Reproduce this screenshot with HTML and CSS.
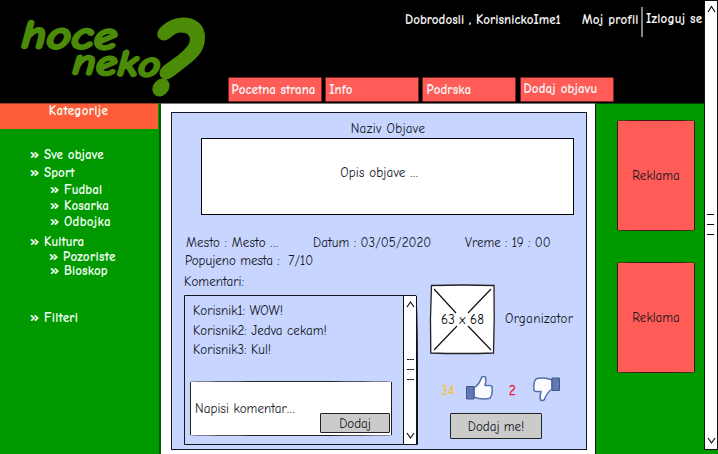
FILE: index.html
```html
<!DOCTYPE html>
<html lang="sr">
<head>
<meta charset="utf-8">
<title>Hoce neko?</title>
<link rel="stylesheet" href="styles.css">
</head>
<body>
<div class="window">
  <div class="page">
    <header class="header">
      <svg class="logo" width="228" height="103" viewBox="0 0 228 103" role="img">
        <g class="logo-text">
          <text class="logo-word" x="21" y="48" textLength="96" lengthAdjust="spacingAndGlyphs" transform="rotate(1 21 48)">hoce</text>
          <text class="logo-word small" x="72" y="74" textLength="88" lengthAdjust="spacingAndGlyphs" transform="rotate(2 72 74)">neko</text>
          <text class="logo-mark" x="150" y="94" textLength="52" lengthAdjust="spacingAndGlyphs">?</text>
        </g>
      </svg>
      <div class="header-main">
        <div class="account">
          <span class="welcome">Dobrodosli , KorisnickoIme1</span>
          <a class="profile">Moj profil</a>
          <span class="divider"></span>
          <a class="logout">Izloguj se</a>
        </div>
        <nav class="nav">
          <a class="nav-item home">Pocetna strana</a>
          <a class="nav-item info">Info</a>
          <a class="nav-item support">Podrska</a>
          <a class="nav-item add">Dodaj objavu</a>
        </nav>
      </div>
    </header>
    <div class="columns">
      <aside class="sidebar">
        <h2 class="sidebar-title">Kategorije</h2>
        <ul class="categories">
          <li class="all"><i>»</i>Sve objave</li>
          <li class="sport"><i>»</i>Sport</li>
          <li class="sub"><i>»</i>Fudbal</li>
          <li class="sub"><i>»</i>Kosarka</li>
          <li class="sub last"><i>»</i>Odbojka</li>
          <li class="culture"><i>»</i>Kultura</li>
          <li class="sub theatre"><i>»</i>Pozoriste</li>
          <li class="sub cinema"><i>»</i>Bioskop</li>
          <li class="filters"><i>»</i>Filteri</li>
        </ul>
      </aside>
      <main class="content">
        <article class="post">
          <h1 class="post-title">Naziv Objave</h1>
          <div class="description"><span>Opis objave <b class="dots">...</b></span></div>
          <div class="facts">
            <span class="place">Mesto : Mesto <b class="dots">...</b></span>
            <span class="date">Datum : 03/05/2020</span>
            <span class="time">Vreme : 19 : 00</span>
          </div>
          <div class="seats">Popujeno mesta :&nbsp; 7/10</div>
          <div class="comments-label">Komentari:</div>
          <div class="lower">
            <section class="comments">
              <div class="comments-body">
                <p class="c1">Korisnik1: WOW!</p>
                <p class="c2">Korisnik2: Jedva cekam!</p>
                <p class="c3">Korisnik3: Kul!</p>
                <div class="composer">
                  <span class="prompt">Napisi komentar<b class="dots">...</b></span>
                  <span class="button send">Dodaj</span>
                </div>
              </div>
              <div class="scroll inner">
                <svg width="9" height="8" viewBox="0 0 9 8"><path d="M1 7 4.500 2 8 7"/></svg>
                <svg class="grip" width="8" height="24" viewBox="0 0 8 24"><path stroke-dasharray="2 .4" d="M1 1.500h7M1 11.500h7M1 21.500h7"/></svg>
                <svg width="9" height="8" viewBox="0 0 9 8"><path d="M1 1 4.500 6 8 1"/></svg>
              </div>
            </section>
            <section class="meta">
              <div class="organizer">
                <svg class="photo" width="65" height="70" viewBox="0 0 65 70">
                  <path class="photo-frame" d="M1.500 1.500Q32 .5 64 1.500L64.200 35 63.500 69Q32 70 .8 69Q-.2 35 1.500 1.500Z"/>
                  <path class="photo-cross" d="M4 5 26 29M61 5 38 29M4 66 27 42M61 66 38 42"/>
                  <text x="11" y="40" textLength="43">63 x 68</text>
                </svg>
                <span class="organizer-name">Organizator</span>
              </div>
              <div class="votes">
                <span class="up-count">34</span>
                <svg class="thumb up" width="29" height="26" viewBox="0 0 29 26">
                  <path class="hand" d="M9 13C13 10 15 8 16.500 2.500Q18 .8 20.500 2Q21.500 5 20 10.500H25Q28 11 27 14Q28 16 26.800 17.500Q27.500 20 25.800 21.500Q25.500 24 22 23.800Q14 24.500 9 22Z"/>
                  <path class="cuff" d="M1.500 11.500H9V24H1.500Z"/>
                </svg>
                <span class="down-count">2</span>
                <svg class="thumb down" width="29" height="26" viewBox="0 0 29 26">
                  <g transform="rotate(180 14.500 13)">
                    <path class="hand" d="M9 13C13 10 15 8 16.500 2.500Q18 .8 20.500 2Q21.500 5 20 10.500H25Q28 11 27 14Q28 16 26.800 17.500Q27.500 20 25.800 21.500Q25.500 24 22 23.800Q14 24.500 9 22Z"/>
                    <path class="cuff" d="M1.500 11.500H9V24H1.500Z"/>
                  </g>
                </svg>
              </div>
              <span class="button join">Dodaj me!</span>
            </section>
          </div>
        </article>
      </main>
      <aside class="ads">
        <div class="ad">Reklama</div>
        <div class="ad">Reklama</div>
      </aside>
    </div>
  </div>
  <div class="scroll outer">
    <svg width="9" height="8" viewBox="0 0 9 8"><path d="M1 7 4.500 1.500 8 7"/></svg>
    <svg class="grip" width="8" height="24" viewBox="0 0 8 24"><path d="M0 1.500h7M0 11.500h7M0 21.500h7"/></svg>
    <svg width="9" height="8" viewBox="0 0 9 8"><path d="M1 1 4.500 6 8 1"/></svg>
  </div>
</div>
</body>
</html>
```
FILE: styles.css
```css
* { box-sizing: border-box; }
body {
  margin: 0;
  background: #009900;
  color: #10131c;
  font: 13px/16px "Comic Neue", "Comic Sans MS", Lato, sans-serif;
  overflow: hidden;
}
h1, h2, p, ul { margin: 0; padding: 0; font-size: inherit; font-weight: inherit; }
svg { display: block; flex: none; overflow: visible; }
span, a, p, li, h1, h2 { white-space: nowrap; }
.dots { font-weight: 400; letter-spacing: .9px; }

.window { display: flex; width: 718px; height: 454px; background: linear-gradient(#000 103px, #009900 103px); }
.page { width: 704px; }
.header { display: flex; height: 103px; background: #000; color: #f4f4f4; font-weight: 700; }
.logo-text { fill: #4b8b08; stroke: #4b8b08; stroke-linejoin: round; font-weight: 700; }
.logo-word { font-size: 41px; font-style: italic; stroke-width: 2px; }
.logo-word.small { font-size: 38px; }
.logo-mark { font-size: 108px; font-style: italic; stroke-width: 5px; }
.header-main { width: 476px; }
.account { display: flex; height: 77px; padding: 7px 0 0 177px; }
.welcome { width: 177px; padding-top: 5px; letter-spacing: .04px; }
.profile { width: 59px; padding-top: 5px; letter-spacing: .25px; }
.divider { width: 2px; height: 30px; background: #858585; }
.logout { padding: 4px 0 0 3px; letter-spacing: .2px; }
.nav { display: grid; grid-template-columns: repeat(4, 94px); column-gap: 3.200px; }
.nav-item { height: 25px; padding: 4px 0 0 3px; background: #ff5c57; border: 1px solid #7c211f; border-radius: 1px; }
.nav-item.home { padding-left: 2.500px; }
.nav-item.info, .nav-item.support { letter-spacing: .1px; }
.nav-item.add { padding-top: 3px; letter-spacing: .15px; }

.columns { display: flex; height: 351px; background: #009900; }
.sidebar { width: 161px; border-right: 2px solid #035c03; color: #f2fff2; font-weight: 700; }
.sidebar-title { width: 158px; height: 26px; padding-right: 1px; background: #ff5c3a; border-top: 1px solid #963a24; text-align: center; line-height: 14px; letter-spacing: .3px; }
.categories { list-style: none; padding: 18px 0 0 30px; letter-spacing: .1px; }
.categories li { height: 16px; line-height: 15px; }
.categories i { display: inline-block; width: 14px; font-style: normal; font-size: 16px; line-height: 14px; }
.categories .all { height: 18px; }
.categories .sport { height: 17px; }
.categories .sub { padding-left: 20px; }
.categories .last { height: 20px; letter-spacing: .3px; }
.categories .culture { height: 15px; }
.categories .theatre { height: 14px; padding-left: 19px; letter-spacing: .3px; }
.categories .filters { margin-top: 31px; letter-spacing: .25px; }

.content { width: 435px; padding: 8px 0 0 10px; background: #fff; border-top: 1px solid #777; border-right: 1px solid #111; }
.post { width: 416px; height: 338px; background: #c8d5ff; border: 1px solid #151820; }
.post-title { padding: 8px 0 0; height: 25px; text-align: center; padding-left: 18px; letter-spacing: .35px; }
.description { display: flex; justify-content: center; width: 373px; height: 77px; margin-left: 29px; padding: 26px 16px 0 0; background: #fff; border: 1px solid #000; }
.description span { letter-spacing: .2px; }
.description .dots { letter-spacing: .9px; }
.facts { display: grid; grid-template-columns: 127px 152px 1fr; padding: 20px 0 0 14px; height: 38px; }
.place { letter-spacing: .2px; }
.date { letter-spacing: .06px; }
.seats { padding-left: 13px; height: 21px; }
.comments-label { padding-left: 12px; height: 21px; letter-spacing: .1px; }
.lower { display: flex; padding-left: 12px; }
.comments { display: flex; width: 234px; height: 150px; border: 1px solid #15171d; border-radius: 1px 2px 1px 1px / 1px 75px 1px 1px; }
.comments-body { width: 218px; padding: 7px 0 0 5px; }
.comments p { height: 19.500px; padding-left: 3px; letter-spacing: .05px; }
.composer { display: flex; width: 202px; height: 55px; margin-top: 19.500px; background: #fff; border: 1px solid #222; border-radius: 50% / 1px; }
.prompt { width: 129px; padding: 19px 0 0 4px; letter-spacing: .1px; }
.button { display: block; text-align: center; background: #cbcbcb; border: 1px solid #222; border-radius: 1px; }
.send { width: 70px; height: 20px; margin-top: 31px; line-height: 19px; flex: none; }

.scroll { display: flex; flex-direction: column; align-items: center; justify-content: space-between; background: #fff; border: 1px solid #111; }
.scroll path { fill: none; stroke: #111; stroke-width: 1.200px; }
.inner { width: 14px; height: 148px; padding: 4px 0; border-width: 0 1px 0 1px; }
.outer { width: 14px; height: 450px; padding: 4px 0 4px; }

.meta { width: 160px; padding-left: 12px; }
.organizer { display: flex; margin-top: -11px; }
.photo-frame { fill: #fff; stroke: #222; stroke-width: 1.300px; }
.photo-cross { fill: none; stroke: #111; stroke-width: 1.200px; }
.organizer-name { padding: 27px 0 0 10px; letter-spacing: .35px; }
.votes { display: flex; height: 59px; padding: 20px 0 0 11px; }
.up-count { width: 24px; padding-top: 9px; color: #f7c02f; letter-spacing: .4px; -webkit-text-stroke: .3px #f7c02f; }
.down-count { width: 23px; margin-left: 15px; padding-top: 9px; color: #f01028; -webkit-text-stroke: .3px #f01028; }
.thumb { margin-top: 1px; }
.down { margin-top: 2px; }
.hand { fill: #fafbff; stroke: #5670aa; stroke-width: 1.500px; stroke-linejoin: round; }
.cuff { fill: #6079b3; stroke: #3f5794; stroke-width: 1px; }
.join { width: 92px; height: 26px; margin-left: 20px; line-height: 25px; }

.ads { display: flex; flex-direction: column; gap: 31px; width: 108px; padding: 16px 0 0 21px; border-top: 1px solid #004400; }
.ad { width: 78px; height: 111px; background: #ff5c57; border: 1px solid #401312; border-radius: 50% / 1px; line-height: 109px; text-align: center; }
```
